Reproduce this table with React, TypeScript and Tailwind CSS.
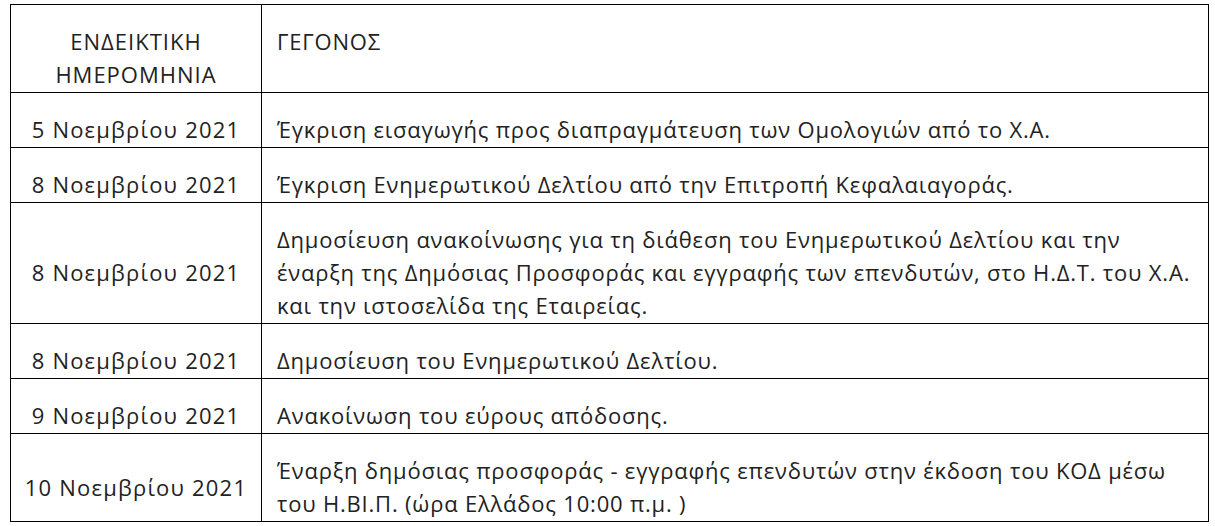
const rows: { date: string; lines: string[] }[] = [
  { date: "5 Νοεμβρίου 2021", lines: ["Έγκριση εισαγωγής προς διαπραγμάτευση των Ομολογιών από το Χ.Α."] },
  { date: "8 Νοεμβρίου 2021", lines: ["Έγκριση Ενημερωτικού Δελτίου από την Επιτροπή Κεφαλαιαγοράς."] },
  {
    date: "8 Νοεμβρίου 2021",
    lines: [
      "Δημοσίευση ανακοίνωσης για τη διάθεση του Ενημερωτικού Δελτίου και την",
      "έναρξη της Δημόσιας Προσφοράς και εγγραφής των επενδυτών, στο Η.Δ.Τ. του Χ.Α.",
      "και την ιστοσελίδα της Εταιρείας.",
    ],
  },
  { date: "8 Νοεμβρίου 2021", lines: ["Δημοσίευση του Ενημερωτικού Δελτίου."] },
  { date: "9 Νοεμβρίου 2021", lines: ["Ανακοίνωση του εύρους απόδοσης."] },
  {
    date: "10 Νοεμβρίου 2021",
    lines: [
      "Έναρξη δημόσιας προσφοράς - εγγραφής επενδυτών στην έκδοση του ΚΟΔ μέσω",
      "του Η.ΒΙ.Π. (ώρα Ελλάδος 10:00 π.μ. )",
    ],
  },
];

export default function App() {
  return (
    <div
      className="min-h-[526px] bg-white pl-[10px] pt-[4px] text-[22px] font-normal leading-[33px] tracking-[0.8px] text-[#222]"
      style={{ fontFamily: '"Open Sans", "Noto Sans", sans-serif' }}
    >
      <div className="grid w-[1199px] grid-cols-[251px_1fr] border-l border-t border-black">
        {/* header */}
        <div className="border-b border-r border-black pb-[1px] pt-[20px] text-center tracking-[1px]">
          <div>ΕΝΔΕΙΚΤΙΚΗ</div>
          <div>ΗΜΕΡΟΜΗΝΙΑ</div>
        </div>
        <div className="border-b border-r border-black pb-[1px] pl-[15px] pt-[20px]">ΓΕΓΟΝΟΣ</div>

        {rows.map((r, i) => (
          <div key={i} className="contents">
            <div className="flex items-center justify-center border-b border-r border-black pb-[1px] pt-[20px] tracking-[1.2px]">
              {r.date}
            </div>
            <div className="border-b border-r border-black pb-[1px] pl-[15px] pt-[20px] whitespace-nowrap">
              {r.lines.map((l, j) => (
                <div key={j}>{l}</div>
              ))}
            </div>
          </div>
        ))}
      </div>
    </div>
  );
}
